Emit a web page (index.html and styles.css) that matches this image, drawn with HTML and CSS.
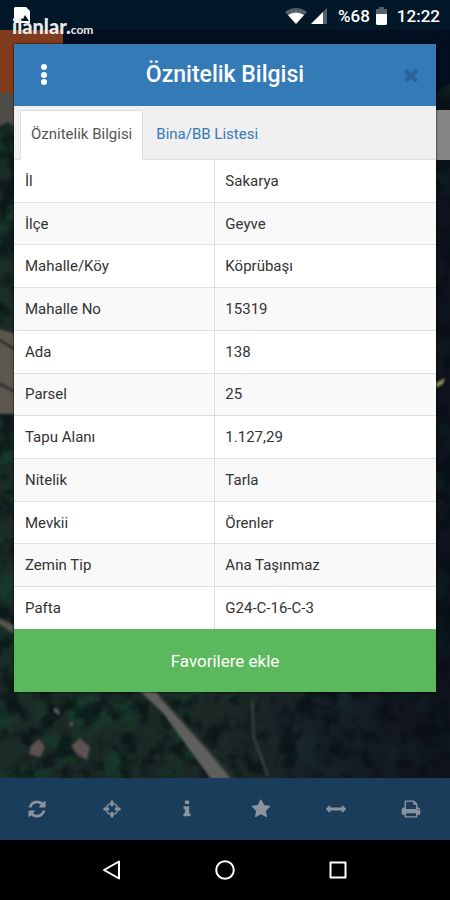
FILE: index.html
```html
<!DOCTYPE html>
<html lang="tr">
<head>
<meta charset="utf-8">
<meta name="viewport" content="width=device-width, initial-scale=1">
<title>Öznitelik Bilgisi</title>
<link rel="stylesheet" href="styles.css">
</head>
<body>
<svg class="map" viewBox="0 0 450 900" preserveAspectRatio="xMidYMid slice" aria-hidden="true">
  <defs>
    <linearGradient id="ground" x1="0" x2="1" y1="0" y2="0">
      <stop offset="0" stop-color="#1b2b27"/>
      <stop offset=".5" stop-color="#1b2826"/>
      <stop offset=".8" stop-color="#151b24"/>
      <stop offset="1" stop-color="#0d121c"/>
    </linearGradient>
    <filter id="trees" x="0" y="0" width="100%" height="100%" color-interpolation-filters="sRGB">
      <feTurbulence type="fractalNoise" baseFrequency=".05" numOctaves="3" seed="8"/>
      <feColorMatrix values="0 0 0 0 .02  0 0 0 0 .05  0 0 0 0 .07  0 0 0 4 -1.8"/>
    </filter>
    <filter id="leaves" x="0" y="0" width="100%" height="100%" color-interpolation-filters="sRGB">
      <feTurbulence type="fractalNoise" baseFrequency=".03" numOctaves="4" seed="21"/>
      <feColorMatrix values="0 0 0 0 .08  0 0 0 0 .25  0 0 0 0 .17  0 4 0 0 -1.9"/>
    </filter>
    <filter id="soft"><feGaussianBlur stdDeviation="1"/></filter>
  </defs>
  <rect width="450" height="900" fill="url(#ground)"/>
  <rect width="210" height="900" filter="url(#leaves)" opacity=".75"/>
  <rect x="210" width="240" height="900" filter="url(#leaves)" opacity=".2"/>
  <rect width="450" height="900" filter="url(#trees)" opacity=".6"/>
  <g filter="url(#soft)">
    <path d="M-4 88h22v40L8 122l-12 6z" fill="#504c47"/>
    <path d="M-4 328l20 6v80H-4z" fill="#5c564d"/>
    <path d="M-4 338l20 12M-4 382l20 10" stroke="#302e2b" stroke-width="3"/>
    <path d="M-4 617l18 8v9l-18-12z" fill="#55544d"/>
    <path d="M139 690l17 2 14 14 61 73h-20l-48-66z" fill="#5e605d"/>
    <path d="M160 696l74 82" stroke="#2c302f" stroke-width="3"/>
    <path d="M252 700l2 38 14 38" fill="none" stroke="#343b35" stroke-width="3"/>
    <path d="M31 746l8-7 6 8-5 10-11-3zM71 746l9-8 10 9-3 13-9-5z" fill="#5e5151"/>
    <path d="M54 707l5 3 1 5-6-3zM69 721l5 3-3 3z" fill="#665957"/>
    <path d="M436 383l9-5-2 6-7 4z" fill="#8e8d5b"/>
  </g>
  <path d="M0 0h450v83l-14 9V44H14V30H0z" fill="#020f20"/>
  <path d="M0 30h63v15H14v48H0z" fill="#813b1d"/>
  <path d="M436 110h14v50h-14z" fill="#858585"/>
</svg>

<header class="status">
  <div class="brand">
    <svg class="brand-mark" viewBox="0 0 16 16" aria-hidden="true"><path d="M1 0h11l4 4v12H0V1z" fill="#fff"/><path d="M5 14l2-3 2 1 2-4 4 6z" fill="#061624"/></svg>
    <span class="brand-name">ilanlar.<span class="brand-suffix">com</span></span>
  </div>
  <div class="indicators">
    <svg class="wifi" viewBox="0 0 22 16" aria-hidden="true"><path d="M0 4q11-8 22 0L11 16z" fill="#52616c"/><path d="M3 7q8-5 16 0l-8 9z" fill="#fff"/></svg>
    <svg class="signal" viewBox="0 0 16 16" aria-hidden="true"><path d="M0 16L16 0v16z" fill="#52616c"/><path d="M0 16L12 4v12z" fill="#fff"/></svg>
    <span class="level">%68</span>
    <svg class="battery" viewBox="0 0 11 18" aria-hidden="true"><path d="M3 0h5v2h3v6H0V2h3z" fill="#52616c"/><path d="M0 7h11v10l-1 1H1l-1-1z" fill="#fff"/></svg>
    <time class="clock">12:22</time>
  </div>
</header>

<main class="stage">
  <section class="dialog" aria-labelledby="title">
    <div class="dialog-head">
      <button class="head-button" type="button" aria-label="Menü">
        <svg class="dots" viewBox="0 0 6 22" aria-hidden="true"><circle cx="3" cy="3" r="3"/><circle cx="3" cy="11" r="3"/><circle cx="3" cy="18" r="3"/></svg>
      </button>
      <h1 id="title" class="dialog-title">Öznitelik Bilgisi</h1>
      <button class="head-button close" type="button" aria-label="Kapat">
        <svg class="icon" viewBox="0 0 1792 1792" aria-hidden="true"><path d="M1490 1322q0 40-28 68l-136 136q-28 28-68 28t-68-28l-294-294-294 294q-28 28-68 28t-68-28l-136-136q-28-28-28-68t28-68l294-294-294-294q-28-28-28-68t28-68l136-136q28-28 68-28t68 28l294 294 294-294q28-28 68-28t68 28l136 136q28 28 28 68t-28 68l-294 294 294 294q28 28 28 68z"/></svg>
      </button>
    </div>
    <nav class="tabs">
      <a class="tab active" href="#info">Öznitelik Bilgisi</a>
      <a class="tab" href="#units">Bina/BB Listesi</a>
    </nav>
    <table id="info" class="details">
      <tbody>
        <tr><th scope="row">İl</th><td>Sakarya</td></tr>
        <tr><th scope="row">İlçe</th><td>Geyve</td></tr>
        <tr><th scope="row">Mahalle/Köy</th><td>Köprübaşı</td></tr>
        <tr><th scope="row">Mahalle No</th><td>15319</td></tr>
        <tr><th scope="row">Ada</th><td>138</td></tr>
        <tr><th scope="row">Parsel</th><td>25</td></tr>
        <tr><th scope="row">Tapu Alanı</th><td>1.127,29</td></tr>
        <tr><th scope="row">Nitelik</th><td>Tarla</td></tr>
        <tr><th scope="row">Mevkii</th><td>Örenler</td></tr>
        <tr><th scope="row">Zemin Tip</th><td>Ana Taşınmaz</td></tr>
        <tr><th scope="row">Pafta</th><td>G24-C-16-C-3</td></tr>
      </tbody>
    </table>
    <button class="favorite" type="button">Favorilere ekle</button>
  </section>
</main>

<div class="toolbar">
  <button class="tool" type="button" aria-label="Yenile"><svg class="icon" viewBox="0 0 1792 1792"><path d="M1639 1056q0 5-1 7-64 268-268 434.5t-478 166.5q-146 0-282.5-55t-243.5-157l-129 129q-19 19-45 19t-45-19-19-45v-448q0-26 19-45t45-19h448q26 0 45 19t19 45-19 45l-137 137q71 66 161 102t187 36q134 0 250-65t186-179q11-17 53-117 8-23 30-23h192q13 0 22.5 9.5t9.5 22.5zm25-800v448q0 26-19 45t-45 19h-448q-26 0-45-19t-19-45 19-45l138-138q-148-137-349-137-134 0-250 65t-186 179q-11 17-53 117-8 23-30 23h-199q-13 0-22.5-9.5t-9.5-22.5v-7q65-268 270-434.5t480-166.5q146 0 284 55.5t245 156.5l130-129q19-19 45-19t45 19 19 45z"/></svg></button>
  <button class="tool" type="button" aria-label="Konum"><svg class="icon" viewBox="0 0 1792 1792"><path d="M1325 1024h-109q-26 0-45-19t-19-45v-128q0-26 19-45t45-19h109q-32-108-112.5-188.5t-188.5-112.5v109q0 26-19 45t-45 19h-128q-26 0-45-19t-19-45v-109q-108 32-188.5 112.5t-112.5 188.5h109q26 0 45 19t19 45v128q0 26-19 45t-45 19h-109q32 108 112.5 188.5t188.5 112.5v-109q0-26 19-45t45-19h128q26 0 45 19t19 45v109q108-32 188.5-112.5t112.5-188.5zm339-192v128q0 26-19 45t-45 19h-143q-37 161-154.5 278.5t-278.5 154.5v143q0 26-19 45t-45 19h-128q-26 0-45-19t-19-45v-143q-161-37-278.5-154.5t-154.5-278.5h-143q-26 0-45-19t-19-45v-128q0-26 19-45t45-19h143q37-161 154.5-278.5t278.5-154.5v-143q0-26 19-45t45-19h128q26 0 45 19t19 45v143q161 37 278.5 154.5t154.5 278.5h143q26 0 45 19t19 45z"/></svg></button>
  <button class="tool" type="button" aria-label="Bilgi"><svg class="icon" viewBox="0 0 1792 1792"><path d="M1216 1344v128q0 26-19 45t-45 19h-512q-26 0-45-19t-19-45v-128q0-26 19-45t45-19h64v-384h-64q-26 0-45-19t-19-45v-128q0-26 19-45t45-19h384q26 0 45 19t19 45v576h64q26 0 45 19t19 45zm-128-1152v192q0 26-19 45t-45 19h-256q-26 0-45-19t-19-45v-192q0-26 19-45t45-19h256q26 0 45 19t19 45z"/></svg></button>
  <button class="tool" type="button" aria-label="Favoriler"><svg class="icon" viewBox="0 0 1792 1792"><path d="M1728 647q0 22-26 48l-363 354 86 500q1 7 1 20 0 21-10.5 35.5t-30.5 14.5q-19 0-40-12l-449-236-449 236q-22 12-40 12-21 0-31.5-14.5t-10.5-35.5q0-6 2-20l86-500-364-354q-25-27-25-48 0-37 56-46l502-73 225-455q19-41 49-41t49 41l225 455 502 73q56 9 56 46z"/></svg></button>
  <button class="tool" type="button" aria-label="Ölçüm"><svg class="icon" viewBox="0 0 1792 1792"><path d="M1792 896q0 26-19 45l-256 256q-19 19-45 19t-45-19-19-45v-128h-1024v128q0 26-19 45t-45 19-45-19l-256-256q-19-19-19-45t19-45l256-256q19-19 45-19t45 19 19 45v128h1024v-128q0-26 19-45t45-19 45 19l256 256q19 19 19 45z"/></svg></button>
  <button class="tool" type="button" aria-label="Yazdır"><svg class="icon" viewBox="0 0 1792 1792"><path d="M448 1536h896v-256h-896v256zm0-640h896v-384h-160q-40 0-68-28t-28-68v-160h-640v640zm1152 64q0-26-19-45t-45-19-45 19-19 45 19 45 45 19 45-19 19-45zm128 0v416q0 13-9.5 22.5t-22.5 9.5h-224v160q0 40-28 68t-68 28h-960q-40 0-68-28t-28-68v-160h-224q-13 0-22.5-9.5t-9.5-22.5v-416q0-79 56.5-135.5t135.5-56.5h64v-544q0-40 28-68t68-28h672q40 0 88 20t76 48l152 152q28 28 48 76t20 88v256h64q79 0 135.5 56.5t56.5 135.5z"/></svg></button>
</div>

<nav class="system">
  <button class="key" type="button" aria-label="Geri"><svg class="key-icon" viewBox="0 0 20 20"><path d="M17 1.500v17L2 10z"/></svg></button>
  <button class="key" type="button" aria-label="Ana ekran"><svg class="key-icon" viewBox="0 0 20 20"><circle cx="10" cy="10" r="8.800"/></svg></button>
  <button class="key" type="button" aria-label="Son uygulamalar"><svg class="key-icon" viewBox="0 0 20 20"><rect x="2.500" y="2.500" width="15" height="15"/></svg></button>
</nav>
</body>
</html>
```
FILE: styles.css
```css
* {
  box-sizing: border-box;
}

body {
  position: relative;
  display: flex;
  flex-direction: column;
  min-height: 100vh;
  margin: 0;
  background: #0e1820;
  color: #333;
  font: 15px/24px Roboto, "Noto Sans", sans-serif;
}

button {
  padding: 0;
  border: 0;
  background: none;
  color: inherit;
  font: inherit;
  cursor: pointer;
}

svg {
  display: block;
}

.map {
  position: absolute;
  inset: 0;
  z-index: -1;
  width: 100%;
  height: 100%;
}

.status {
  display: flex;
  justify-content: space-between;
  height: 30px;
  padding: 0 10px 0 12px;
  background: #021727;
  color: #fff;
}

.brand {
  padding-top: 7px;
  color: #e8eaec;
}

.brand-mark {
  width: 16px;
  height: 16px;
  margin-left: 2px;
}

.brand-name {
  display: block;
  margin-top: -7px;
  font: 900 20px/20px Lato, sans-serif;
}

.brand-suffix {
  font-size: 12px;
  font-weight: 700;
}

.indicators {
  display: flex;
  align-items: center;
  height: 32px;
  font-size: 17px;
  font-weight: 500;
}

.wifi {
  width: 22px;
  height: 16px;
  margin-right: 4px;
}

.signal {
  width: 16px;
  height: 16px;
  margin-right: 11px;
}

.battery {
  width: 11px;
  height: 18px;
  margin: 0 10px 0 6px;
}

.stage {
  flex: 1;
  padding: 14px;
}

.dialog {
  background: #fff;
  box-shadow: 0 0 2px #000;
}

.dialog-head {
  display: flex;
  align-items: center;
  height: 62px;
  background: #337ab7;
  color: #fff;
}

.head-button {
  display: grid;
  place-items: center;
  width: 60px;
  height: 62px;
}

.dots {
  width: 6px;
  height: 22px;
  fill: currentColor;
}

.close {
  padding-left: 10px;
  color: #286497;
}

.icon {
  width: 20px;
  height: 20px;
  fill: currentColor;
}

.dialog-title {
  flex: 1;
  margin: 0;
  font-size: 23px;
  font-weight: 500;
  text-align: center;
}

.tabs {
  display: flex;
  gap: 2px;
  height: 54px;
  padding: 4px 6px 0;
  border-bottom: 1px solid #ddd;
  background: #f0f0f0;
}

.tab {
  height: 50px;
  padding: 11px 10px 0;
  border: 1px solid transparent;
  color: #337ab7;
  text-decoration: none;
}

.tab.active {
  border-color: #ddd;
  border-bottom-color: #fff;
  background: #fff;
  color: #555;
}

.details {
  width: 100%;
  height: 469px;
  border-collapse: collapse;
  table-layout: fixed;
}

.details tr:nth-child(even) {
  background: #f9f9f9;
}

.details th,
.details td {
  padding: 8px 10px;
  border-bottom: 1px solid #ddd;
  font-weight: 400;
  text-align: left;
}

.details th {
  width: 47.6%;
  padding-left: 11px;
  border-right: 1px solid #ddd;
}

.details tr:last-child > * {
  border-bottom: 0;
}

.favorite {
  display: block;
  width: 100%;
  height: 63px;
  background: #5cb85c;
  color: #fff;
  font-size: 17px;
}

.toolbar {
  display: grid;
  grid-template-columns: repeat(6, 1fr);
  height: 62px;
  padding-right: 2px;
  background: #1a3d5b;
  color: #8b949c;
}

.tool,
.key {
  display: grid;
  place-items: center;
}

.system {
  display: grid;
  grid-template-columns: repeat(3, 1fr);
  height: 60px;
  padding: 0 56px;
  background: #000;
}

.key-icon {
  width: 20px;
  height: 20px;
  fill: none;
  stroke: #fff;
  stroke-width: 2;
  stroke-linejoin: round;
}
```
